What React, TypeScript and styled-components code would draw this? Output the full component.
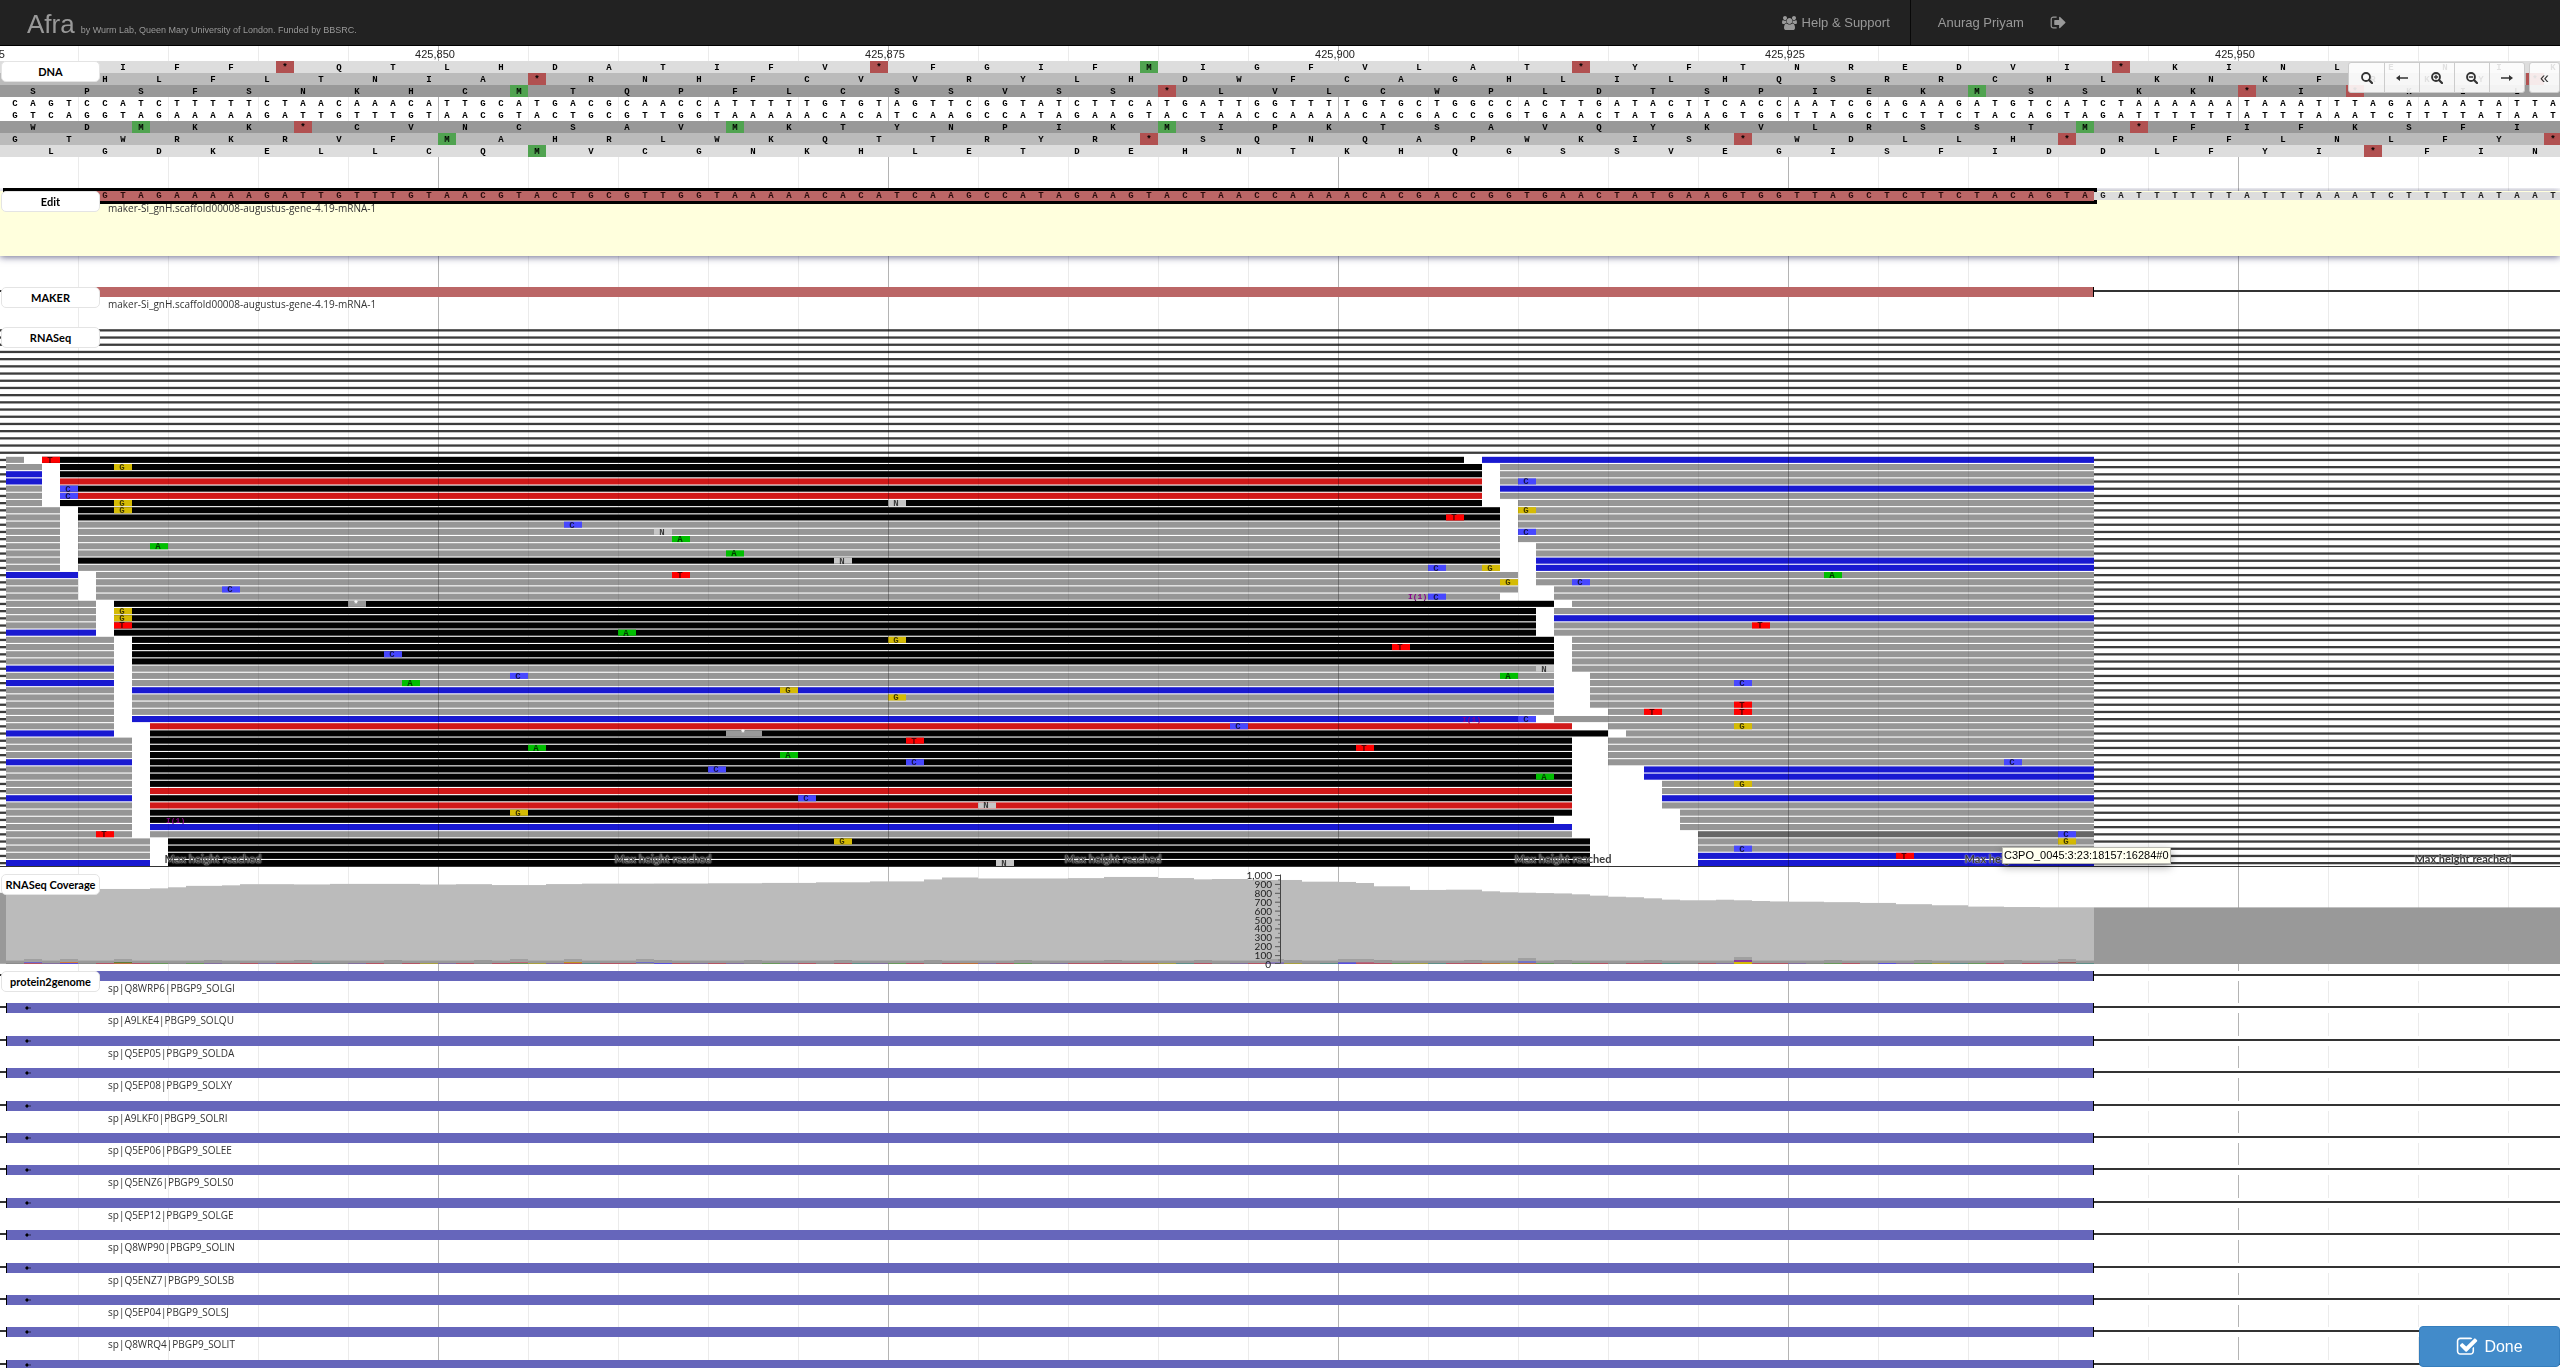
import React from 'react';
import styled, { createGlobalStyle } from 'styled-components';

const COL = 18;
const START = 6;
const EXON_COLS = 116;
const SANS = '"Liberation Sans", Arial, Helvetica, sans-serif';
const LABEL = 'Lato, "Open Sans", sans-serif';
const NAME = '"Open Sans", Lato, sans-serif';
const MONO = '"Liberation Mono", "Courier New", monospace';

const GlobalStyle = createGlobalStyle`
  * { box-sizing: border-box; }
  body { margin: 0; background: #fff; font-family: ${SANS}; overflow: hidden; }
  button { font: inherit; margin: 0; cursor: pointer; }
`;

/* ---------- data ---------- */

const REVERSE_STRAND =
  'GTCAGGTAGAAAAAGATTGTTTGTAACGTACTGCG' +
  'TTGGTAAAAACACATCAAGCCATAGAAGTACTAACC' +
  'AAAACACGACCGGTGAACTATGAAGTGGTTAGCT' +
  'CTTCTACAGTAGATTTTTTATTTAAATCTTTTATAAT';

const PAIR: Record<string, string> = { A: 'T', T: 'A', G: 'C', C: 'G' };
const FORWARD_STRAND = REVERSE_STRAND.split('').map((b) => PAIR[b]).join('');

type Frame = { tone: string; offset: number; residues: string };

const FORWARD_FRAMES: Frame[] = [
  { tone: '#dddddd', offset: 0, residues: 'QSIFF*QTLHDATIFV*FGIFMIGFVLAT*YFTNREDVI*KINLENIK' },
  { tone: '#bbbbbb', offset: 2, residues: 'PHLFLTNIA*RNHFCVVRYLHDWFCAGHLILHQSRRCHLKNKFRKY*' },
  { tone: '#999999', offset: 1, residues: 'SPSFSNKHCMTQPFLCSSVSS*LVLCWPLDTSPIEKMSSKK*I*KIL' },
];

const REVERSE_FRAMES: Frame[] = [
  { tone: '#999999', offset: 1, residues: 'WDMKK*CVNCSAVMKTYNPIKMIPKTSAVQYKVLRSSTM*FIFKSFI' },
  { tone: '#bbbbbb', offset: 0, residues: 'GTWRKRVFMAHRLWKQTTRYR*SQNQAPWKIS*WDLLH*RFFLNLFY*' },
  { tone: '#dddddd', offset: 2, residues: 'LGDKELLCQMVCGNKHLETDEHNTKHQGSSVEGISFIDDLFYI*FIN' },
];

const RULER = ['425,825', '425,850', '425,875', '425,900', '425,925', '425,950'];

/* Each row: aligned blocks (colour, first column - last column), then mismatches. */
const READS = [
  'g0-1 k2-81 b82-116 | T2',
  'g0-2 k3-82 g83-116 | G6',
  'b0-2 k3-82 g83-116',
  'b0-2 r3-82 g83-116 | C84',
  'g0-2 k3-82 b83-116 | C3',
  'g0-2 r3-82 g83-116 | C3',
  'g0-2 k3-82 g84-116 | G6 N49',
  'g0-3 k4-83 g84-116 | G6 G84',
  'g0-3 k4-83 g84-116 | T80',
  'g0-3 g4-83 g84-116 | C31',
  'g0-3 g4-83 g84-116 | N36 C84',
  'g0-3 g4-83 g84-116 | A37',
  'g0-3 g4-83 g85-116 | A8',
  'g0-3 g4-83 g85-116 | A40',
  'g0-3 k4-83 b85-116 | N46',
  'g0-3 g4-83 b85-116 | C79 G82',
  'b0-4 g5-84 g85-116 | T37 A101',
  'g0-4 g5-84 g85-116 | G83 C87',
  'g0-4 g5-84 g86-116 | C12',
  'g0-4 g5-83 g86-116 | I78 C79',
  'g0-5 k6-86 g87-116 | *19',
  'g0-5 k6-85 g86-116 | G6',
  'g0-5 k6-85 b86-116 | G6',
  'g0-5 k6-85 g86-116 | T6 T97',
  'b0-5 k6-85 g86-116 | A34',
  'g0-6 k7-86 g87-116 | G49',
  'g0-6 k7-86 g87-116 | T77',
  'g0-6 k7-86 g87-116 | C21',
  'g0-6 k7-86 g87-116',
  'b0-6 g7-86 g87-116 | N85',
  'g0-6 g7-86 g88-116 | C28 A83',
  'b0-6 g7-86 g88-116 | A22 C96',
  'g0-6 b7-86 g88-116 | G43',
  'g0-6 g7-86 g88-116 | G49',
  'g0-6 g7-86 g88-116 | T96',
  'g0-6 g7-86 g89-116 | T91 T96',
  'g0-6 b7-85 g86-116 | I81 C84',
  'g0-6 r8-87 g89-116 | C68 G96',
  'b0-6 k8-89 g90-116 | #40',
  'g0-7 k8-87 g89-116 | T50',
  'g0-7 k8-87 g89-116 | A29 T75',
  'g0-7 k8-87 g89-116 | A43',
  'b0-7 k8-87 g89-116 | C50 C111',
  'g0-7 k8-87 b91-116 | C39',
  'g0-7 k8-87 b91-116 | A85',
  'g0-7 k8-87 g92-116 | G96',
  'g0-7 r8-87 g92-116',
  'b0-7 k8-87 b92-116 | C44',
  'g0-7 r8-87 g92-116 | N54',
  'g0-7 k8-87 g93-116 | G28',
  'g0-7 k8-86 g93-116 | I9',
  'g0-7 b8-87 g93-116',
  'g0-7 g8-87 h94-116 | T5 C114',
  'g0-8 k9-88 g94-116 | G46 G114',
  'g0-8 k9-88 g94-116 | C96',
  'g0-8 k9-88 b94-116 | T105',
  'b0-8 k9-88 b94-116 | N55',
];

const READ_COLOR: Record<string, string> = {
  g: '#969696',
  k: '#020202',
  b: '#1919d1',
  r: '#d11919',
  h: '#666666',
};

const BASE_COLOR: Record<string, string> = {
  A: '#00bf00',
  C: '#4747ff',
  G: '#d5bb04',
  T: '#ff0000',
  N: '#c6c6c6',
  '*': '#999999',
  '#': '#999999',
};

/* Coverage as [first column, depth] steps. */
const COVERAGE: [number, number][] = [
  [0, 843], [8, 850], [9, 862], [10, 878], [12, 884], [13, 897], [16, 894], [18, 900], [23, 893],
  [25, 897], [27, 887], [30, 898], [32, 903], [36, 904], [39, 907], [42, 911], [45, 918], [48, 928],
  [51, 950], [52, 972], [54, 961], [59, 965], [61, 978], [64, 966], [66, 951], [67, 955], [69, 948],
  [70, 944], [72, 925], [74, 922], [75, 910], [76, 873], [78, 832], [80, 835], [82, 817], [83, 806],
  [84, 801], [85, 797], [86, 793], [87, 783], [88, 768], [89, 756], [90, 750], [91, 738], [92, 723],
  [93, 716], [95, 722], [96, 716], [97, 708], [98, 703], [99, 700], [101, 695], [103, 686],
  [105, 672], [107, 660], [109, 645], [111, 640], [113, 637], [116, 636],
];

const MISMATCH_TONE: Record<string, string> = {
  n: '#8c8c8c', b: '#5a50dd', r: '#b45565', o: '#c0703c', g: '#6a9a5c', y: '#a8a040', p: '#83709f', t: '#5f8f88',
};

const MISMATCHES =
  'nrpbnrorgngpnrprrtnprnryprnrgyprtrrnbrprpngprnrtpgrnroprgnpr' +
  'rrroytrnprpyntbrrgytrroyogngrnrrtnrpyrrpngrnbpgytgrnrpntgyrp';

/* Taller stacks: [column, height, colour]. */
const STACKS: [number, number, string][] = [
  [1, 1, '#7068c8'], [3, 1, '#cf7a3c'], [6, 1, '#5f7d3a'], [28, 1, '#c06878'], [31, 1, '#c09020'],
  [35, 1, '#7070c8'], [70, 1, '#8a80b8'], [74, 1, '#6a68c0'], [75, 1, '#b06a80'],
  [84, 2, '#7373c4'], [96, 3, '#8a3a9a'], [114, 1, '#a06060'],
];

const PROTEINS = [
  'sp|Q8WRP6|PBGP9_SOLGI',
  'sp|A9LKE4|PBGP9_SOLQU',
  'sp|Q5EP05|PBGP9_SOLDA',
  'sp|Q5EP08|PBGP9_SOLXY',
  'sp|A9LKF0|PBGP9_SOLRI',
  'sp|Q5EP06|PBGP9_SOLEE',
  'sp|Q5ENZ6|PBGP9_SOLS0',
  'sp|Q5EP12|PBGP9_SOLGE',
  'sp|Q8WP90|PBGP9_SOLIN',
  'sp|Q5ENZ7|PBGP9_SOLSB',
  'sp|Q5EP04|PBGP9_SOLSJ',
  'sp|Q8WRQ4|PBGP9_SOLIT',
  '',
];

const GENE = 'maker-Si_gnH.scaffold00008-augustus-gene-4.19-mRNA-1';

/* ---------- page frame ---------- */

const Page = styled.div`
  position: relative;
  height: 100vh;
  overflow: hidden;
  display: flex;
  flex-direction: column;
`;

const Navbar = styled.header`
  display: flex;
  align-items: stretch;
  height: 46px;
  flex: none;
  padding: 0 18.8% 0 27px;
  background: #222;
  border-bottom: 1px solid #000;
  color: #999;
`;

const Brand = styled.a`
  display: flex;
  align-items: baseline;
  gap: 6px;
  color: #999;
  font-size: 26px;
  line-height: 48px;
  text-decoration: none;
`;

const Byline = styled.small`
  font-size: 9px;
`;

const Nav = styled.nav`
  display: flex;
  margin-left: auto;
`;

const NavLink = styled.a<{ $divided?: boolean }>`
  display: flex;
  align-items: center;
  gap: 5px;
  margin-right: ${(p) => (p.$divided ? '13px' : '0')};
  padding: 0 ${(p) => (p.$divided ? '20px' : '12px')} 0 14px;
  border-right: ${(p) => (p.$divided ? '1px solid #080808' : '0')};
  color: #999;
  font-size: 13px;
  text-decoration: none;
`;

const Browser = styled.main`
  position: relative;
  flex: 1;
  min-height: 0;
  overflow: hidden;
  background-image:
    linear-gradient(90deg, #b4b4b4 1px, transparent 1px),
    linear-gradient(90deg, #ebebeb 1px, transparent 1px);
  background-size: 450px 100%, 90px 100%;
  background-position: 438px 0, 78px 0;
`;

const Ruler = styled.div`
  display: flex;
  height: 15px;
  margin-left: -240px;
  overflow: hidden;
`;

const Tick = styled.span`
  flex: none;
  width: 450px;
  text-align: center;
  font-size: 11px;
  line-height: 16px;
  color: #222;
`;

const Track = styled.section<{ $gap: number }>`
  position: relative;
  margin-bottom: ${(p) => p.$gap}px;
`;

const TrackLabel = styled.h2`
  position: absolute;
  z-index: 2;
  left: 1px;
  top: 0;
  width: 99px;
  height: 21px;
  margin: 0;
  border: 1px solid #e4e4e4;
  border-radius: 5px;
  background: #fff;
  color: #000;
  font: bold 11px/20px ${LABEL};
  text-align: center;
  white-space: nowrap;
`;

/* ---------- sequence ---------- */

const SequenceRow = styled.div<{ $tone?: string; $offset?: number }>`
  display: flex;
  height: 12px;
  overflow: hidden;
  padding-left: ${(p) => START + COL * (p.$offset || 0)}px;
  background: ${(p) => p.$tone || 'transparent'};
  font: bold 9px/14px ${MONO};
  color: #000;
`;

const Base = styled.span`
  flex: none;
  width: ${COL}px;
  text-align: center;
`;

const Residue = styled.span<{ $kind: string }>`
  flex: none;
  width: ${COL}px;
  margin-right: ${COL * 2}px;
  text-align: center;
  background: ${(p) => (p.$kind === '*' ? '#b15151' : p.$kind === 'M' ? '#50a350' : 'transparent')};
`;

const EditTrack = styled(Track)`
  display: flex;
  flex-direction: column;
  height: 65px;
  background: #ffffdd;
  box-shadow: 0 1px 7px rgba(40, 40, 90, 0.7);
  clip-path: inset(-3px 0 -12px 0);
`;

const EditSequence = styled.div`
  display: flex;
  flex: none;
  align-items: center;
  height: 16px;
  margin-top: -3px;
  padding-left: 3px;
  font: bold 9px/10px ${MONO};
`;

const EditExon = styled.div`
  display: flex;
  flex: none;
  height: 16px;
  border: 3px solid #000;
  background: #bb6666;
  color: #2a0c0c;
`;

const EditRest = styled.div`
  display: flex;
  flex: 1;
  height: 8px;
  margin-left: -3px;
  overflow: hidden;
  background: #ddd;
  line-height: 8px;
  color: #222;
`;

const FeatureName = styled.div<{ $raise?: boolean }>`
  margin: ${(p) => (p.$raise ? '-3px' : '0')} 0 0 108px;
  color: #333;
  font: 10px/14px ${NAME};
  height: 14px;
  white-space: nowrap;
`;

/* ---------- features ---------- */

const Feature = styled.div<{ $blank?: boolean }>`
  position: relative;
  height: 10px;
  background: ${(p) => (p.$blank ? '#fff' : 'transparent')};

  &::before {
    content: '';
    position: absolute;
    top: 3px;
    width: 100%;
    height: 2px;
    background: #333;
  }
`;

const Exon = styled.div<{ $color: string }>`
  position: relative;
  display: flex;
  align-items: center;
  width: ${COL * EXON_COLS}px;
  height: 10px;
  margin-left: ${START}px;
  padding-left: 18px;
  border: 0 solid #000;
  border-width: 0 1px;
  background: ${(p) => p.$color};
`;

const ProteinList = styled.div`
  display: grid;
  grid-auto-rows: 32px 33px 32px 33px 32px;
`;

const Pileup = styled.svg`
  display: block;
  width: 100%;
  height: 540px;
  mix-blend-mode: multiply;
`;

const Chart = styled.svg`
  display: block;
  width: 100%;
  height: 90px;
  overflow: visible;
`;

const MaxHeight = styled.div`
  position: absolute;
  left: 0;
  right: 0;
  bottom: 1px;
  display: flex;
  margin-left: -12px;
  overflow: hidden;
`;

const MaxHeightNote = styled.span`
  flex: none;
  width: 450px;
  text-align: center;
  color: #3a3a3a;
  font: bold 11px/14px ${LABEL};
  text-shadow: 0 0 1px rgba(255, 255, 255, 0.8), 0 0 2px rgba(255, 255, 255, 0.7);
`;

const Tooltip = styled.div`
  position: absolute;
  z-index: 5;
  left: 2002px;
  top: 801px;
  height: 17px;
  padding: 0 1px;
  border: 1px solid #b8b8b0;
  background: #fffff0;
  box-shadow: 0 3px 8px rgba(0, 0, 0, 0.35);
  color: #000;
  font-size: 11px;
  line-height: 15px;
`;

/* ---------- controls ---------- */

const Controls = styled.div`
  position: absolute;
  z-index: 4;
  top: 16px;
  right: 0;
  display: flex;
  gap: 4px;
`;

const ButtonGroup = styled.div`
  display: flex;
  border: 1px solid #ccc;
  border-radius: 3px;
  overflow: hidden;
  background: rgba(255, 255, 255, 0.88);
`;

const ToolButton = styled.button<{ $slim?: boolean }>`
  display: flex;
  align-items: center;
  justify-content: center;
  width: ${(p) => (p.$slim ? '29px' : '35px')};
  height: 29px;
  padding: 0;
  border: 0;
  background: transparent;
  color: #333;
  font-size: 16px;
  line-height: 16px;

  & + & {
    border-left: 1px solid #ccc;
  }
`;

const DoneButton = styled.button`
  position: absolute;
  z-index: 4;
  right: 0;
  bottom: 1px;
  display: flex;
  align-items: center;
  justify-content: center;
  gap: 6px;
  width: 141px;
  height: 41px;
  border: 1px solid #357ebd;
  border-radius: 4px;
  background: #428bca;
  color: #fff;
  font-size: 16px;
`;

/* ---------- icons ---------- */

const UsersIcon = () => (
  <svg width="15" height="14" viewBox="0 0 1920 1792" fill="currentColor" aria-hidden="true">
    <path d="M593 896q-162 5-265 128h-134q-82 0-138-40.5t-56-118.5q0-353 124-353 6 0 43.5 21t97.5 42.5 119 21.5q67 0 133-23-5 37-5 66 0 139 81 256zm1071 637q0 120-73 189.5t-194 69.5h-874q-121 0-194-69.5t-73-189.5q0-53 3.5-103.5t14-109 26.5-108.5 43-97.5 62-81 85.5-53.5 111.5-20q10 0 43 21.5t73 48 107 48 135 21.5 135-21.5 107-48 73-48 43-21.5q61 0 111.5 20t85.5 53.5 62 81 43 97.5 26.5 108.5 14 109 3.5 103.5zm-1024-1277q0 106-75 181t-181 75-181-75-75-181 75-181 181-75 181 75 75 181zm704 384q0 159-112.5 271.5t-271.5 112.5-271.5-112.5-112.5-271.5 112.5-271.5 271.5-112.5 271.5 112.5 112.5 271.5zm576 225q0 78-56 118.5t-138 40.5h-134q-103-123-265-128 81-117 81-256 0-29-5-66 66 23 133 23 59 0 119-21.5t97.5-42.5 43.5-21q124 0 124 353zm-128-609q0 106-75 181t-181 75-181-75-75-181 75-181 181-75 181 75 75 181z" />
  </svg>
);

const SignOutIcon = () => (
  <svg width="17" height="17" viewBox="0 0 1792 1792" fill="currentColor" aria-hidden="true">
    <path d="M704 1440q0 4 1 20t.5 26.5-3 23.5-10 19.5-20.5 6.5h-320q-119 0-203.5-84.5t-84.5-203.5v-704q0-119 84.5-203.5t203.5-84.5h320q13 0 22.5 9.5t9.5 22.5q0 4 1 20t.5 26.5-3 23.5-10 19.5-20.5 6.5h-320q-66 0-113 47t-47 113v704q0 66 47 113t113 47h312l11.5 1 11.5 3 8 5.5 7 9 2 13.5zm928-544q0 26-19 45l-544 544q-19 19-45 19t-45-19-19-45v-288h-448q-26 0-45-19t-19-45v-384q0-26 19-45t45-19h448v-288q0-26 19-45t45-19 45 19l544 544q19 19 19 45z" />
  </svg>
);

const CheckIcon = () => (
  <svg width="22" height="22" viewBox="0 0 1792 1792" fill="currentColor" aria-hidden="true">
    <path d="M1472 930v318q0 119-84.5 203.5t-203.5 84.5h-832q-119 0-203.5-84.5t-84.5-203.5v-832q0-119 84.5-203.5t203.5-84.5h832q63 0 117 25 15 7 18 23 3 17-9 29l-49 49q-10 10-23 10-3 0-9-2-23-6-45-6h-832q-66 0-113 47t-47 113v832q0 66 47 113t113 47h832q66 0 113-47t47-113v-254q0-13 9-22l64-64q10-10 23-10 6 0 12 3 20 8 20 29zm231-489l-814 814q-24 24-57 24t-57-24l-430-430q-24-24-24-57t24-57l110-110q24-24 57-24t57 24l263 263 647-647q24-24 57-24t57 24l110 110q24 24 24 57t-24 57z" />
  </svg>
);

const LensIcon = ({ sign }: { sign?: 'plus' | 'minus' }) => (
  <svg width="12" height="12" viewBox="0 0 12 12" fill="none" stroke="currentColor" aria-hidden="true">
    <circle cx="5" cy="5" r="4" strokeWidth="1.8" />
    <path d="M8.2 8.2l2.8 2.8" strokeWidth="2.2" strokeLinecap="round" />
    {sign && <path d={sign === 'plus' ? 'M2.8 5h4.4M5 2.8v4.4' : 'M2.8 5h4.4'} strokeWidth="1.3" />}
  </svg>
);

const ArrowIcon = ({ right }: { right?: boolean }) => (
  <svg width="12" height="8" viewBox="0 0 12 8" fill="currentColor" aria-hidden="true">
    <path d={right ? 'M0 3.2h8V1l4 3-4 3V4.8H0z' : 'M12 3.2H4V1L0 4l4 3V4.8h8z'} />
  </svg>
);

const StrandIcon = () => (
  <svg width="6" height="4" viewBox="0 0 6 4" fill="#000" aria-hidden="true">
    <path d="M0 2l2-2 2 2-2 2z" />
    <path d="M4 1h2v2H4z" opacity="0.3" />
  </svg>
);

/* ---------- drawings ---------- */

const ROW_PITCH = 7.2;
const PLAIN_ROWS = 18;
const colX = (n: number) => START + COL * n;

const AlignmentRow = ({ row, source }: { row: number; source: string }) => {
  const y = 0.2 + ROW_PITCH * row;
  const [blocks, marks = ''] = source.split(' | ');
  return (
    <g>
      {blocks.split(' ').map((b) => {
        const [from, to] = b.slice(1).split('-').map(Number);
        return <rect key={b} x={colX(from)} y={y} width={COL * (to - from)} height="6.1" fill={READ_COLOR[b[0]]} />;
      })}
      {marks.split(' ').filter(Boolean).map((m) => {
        const x = colX(Number(m.slice(1)));
        const kind = m[0];
        if (kind === 'I') {
          return (
            <text key={m} x={x - 2} y={y + 5.7} fontSize="8" fontWeight="bold" fill="#880088">I(1)</text>
          );
        }
        const width = kind === '#' ? COL * 2 : COL;
        const gap = kind === '*' || kind === '#';
        return (
          <g key={m}>
            <rect x={x} y={y} width={width} height="6.1" fill={BASE_COLOR[kind]} />
            <text x={x + width / 2 - 1} y={y + 6} fontSize="9" fontWeight="bold" textAnchor="middle" fill={gap ? '#fff' : '#000'} opacity={gap ? 1 : 0.7}>
              {gap ? '*' : kind}
            </text>
          </g>
        );
      })}
    </g>
  );
};

const AlignmentPileup = () => (
  <Pileup fontFamily={MONO}>
    {Array.from({ length: PLAIN_ROWS + READS.length }, (_, r) => {
      const y = 2.2 + ROW_PITCH * r;
      return r < PLAIN_ROWS ? (
        <rect key={r} x="0" y={y} width="100%" height="2.3" fill="#3c3c3c" />
      ) : (
        <g key={r}>
          <rect x="0" y={y} width={START} height="2.3" fill="#3c3c3c" />
          <rect x={colX(EXON_COLS)} y={y} width="100%" height="2.3" fill="#3c3c3c" />
        </g>
      );
    })}
    {READS.map((source, k) => (
      <AlignmentRow key={k} row={PLAIN_ROWS + k} source={source} />
    ))}
    <rect x="0" y="539" width="100%" height="1" fill="#333" />
  </Pileup>
);

const depthY = (depth: number) => 90 - depth * 0.089;

const CoverageChart = () => (
  <Chart fontFamily={LABEL}>
    <rect x="0" y={depthY(800)} width={START} height="71" fill="#999" />
    {COVERAGE.map(([from, depth], i) => {
      const last = i === COVERAGE.length - 1;
      const to = last ? 0 : COVERAGE[i + 1][0];
      return (
        <rect
          key={from}
          x={colX(from)}
          y={depthY(depth)}
          width={last ? '100%' : COL * (to - from)}
          height={90 - depthY(depth)}
          fill={last ? '#999' : '#bbb'}
        />
      );
    })}
    {MISMATCHES.slice(0, EXON_COLS).split('').map((tone, n) => (
      <g key={n}>
        <rect x={colX(n)} y={n % 5 === 1 ? 86 : 86.6} width={COL} height="3.4" fill="#999" />
        <rect x={colX(n)} y="89" width={COL} height="1" fill={MISMATCH_TONE[tone]} />
      </g>
    ))}
    {STACKS.map(([n, h, color]) => (
      <g key={n}>
        <rect x={colX(n)} y={86 - h} width={COL} height="3" fill="#a0a0a0" />
        <rect x={colX(n)} y={89 - h} width={COL} height={h} fill={color} />
      </g>
    ))}
    <rect x={colX(96)} y="88" width={COL} height="2" fill="#d5bb04" />
    <path d="M1280.5 0.5V89.5" stroke="#444" fill="none" />
    {Array.from({ length: 11 }, (_, i) => {
      const y = depthY(i * 100);
      return (
        <g key={i}>
          <rect x="1275" y={Math.min(y, 89)} width="5" height="1" fill="#555" />
          {i < 10 && <rect x="1278" y={y - 4.5} width="2" height="1" fill="#777" />}
          <text x={i ? 1272 : 1271} y={y + 4} fontSize="10" textAnchor="end" fill="#222">
            {i === 10 ? '1,000' : i * 100}
          </text>
        </g>
      );
    })}
  </Chart>
);

const FrameRow = ({ frame }: { frame: Frame }) => (
  <SequenceRow $tone={frame.tone} $offset={frame.offset}>
    {frame.residues.split('').map((r, i) => (
      <Residue key={i} $kind={r}>{r}</Residue>
    ))}
  </SequenceRow>
);

const Bases = ({ text }: { text: string }) => (
  <>
    {text.split('').map((b, i) => (
      <Base key={i}>{b}</Base>
    ))}
  </>
);

export default function App() {
  return (
    <Page>
      <GlobalStyle />
      <Navbar>
        <Brand href="#">
          Afra <Byline>by Wurm Lab, Queen Mary University of London. Funded by BBSRC.</Byline>
        </Brand>
        <Nav>
          <NavLink href="#help" $divided><UsersIcon /> Help &amp; Support</NavLink>
          <NavLink href="#account">Anurag Priyam</NavLink>
          <NavLink href="#signout" aria-label="Sign out"><SignOutIcon /></NavLink>
        </Nav>
      </Navbar>

      <Browser>
        <Ruler>
          {RULER.map((t) => <Tick key={t}>{t}</Tick>)}
        </Ruler>

        <Track $gap={34}>
          <TrackLabel>DNA</TrackLabel>
          {FORWARD_FRAMES.map((f) => <FrameRow key={f.offset} frame={f} />)}
          <SequenceRow><Bases text={FORWARD_STRAND} /></SequenceRow>
          <SequenceRow><Bases text={REVERSE_STRAND} /></SequenceRow>
          {REVERSE_FRAMES.map((f) => <FrameRow key={f.offset} frame={f} />)}
        </Track>

        <EditTrack $gap={31}>
          <TrackLabel>Edit</TrackLabel>
          <EditSequence>
            <EditExon><Bases text={REVERSE_STRAND.slice(0, EXON_COLS)} /></EditExon>
            <EditRest><Bases text={REVERSE_STRAND.slice(EXON_COLS)} /></EditRest>
          </EditSequence>
          <FeatureName $raise>{GENE}</FeatureName>
        </EditTrack>

        <Track $gap={16}>
          <TrackLabel>MAKER</TrackLabel>
          <Feature><Exon $color="#bb6666" /></Feature>
          <FeatureName>{GENE}</FeatureName>
        </Track>

        <Track $gap={7}>
          <TrackLabel>RNASeq</TrackLabel>
          <AlignmentPileup />
          <MaxHeight>
            {RULER.map((t) => <MaxHeightNote key={t}>Max height reached</MaxHeightNote>)}
          </MaxHeight>
        </Track>

        <Track $gap={7}>
          <TrackLabel>RNASeq Coverage</TrackLabel>
          <CoverageChart />
        </Track>

        <Track $gap={0}>
          <TrackLabel>protein2genome</TrackLabel>
          <ProteinList>
            {PROTEINS.map((name) => (
              <div key={name}>
                <Feature $blank><Exon $color="#6666bb"><StrandIcon /></Exon></Feature>
                <FeatureName>{name}</FeatureName>
              </div>
            ))}
          </ProteinList>
        </Track>

        <Controls>
          <ButtonGroup>
            <ToolButton aria-label="Search"><LensIcon /></ToolButton>
            <ToolButton aria-label="Move left"><ArrowIcon /></ToolButton>
            <ToolButton aria-label="Zoom in"><LensIcon sign="plus" /></ToolButton>
            <ToolButton aria-label="Zoom out"><LensIcon sign="minus" /></ToolButton>
            <ToolButton aria-label="Move right"><ArrowIcon right /></ToolButton>
          </ButtonGroup>
          <ButtonGroup>
            <ToolButton $slim aria-label="Collapse">«</ToolButton>
          </ButtonGroup>
        </Controls>

        <Tooltip role="tooltip">C3PO_0045:3:23:18157:16284#0</Tooltip>
      </Browser>

      <DoneButton><CheckIcon /> Done</DoneButton>
    </Page>
  );
}
